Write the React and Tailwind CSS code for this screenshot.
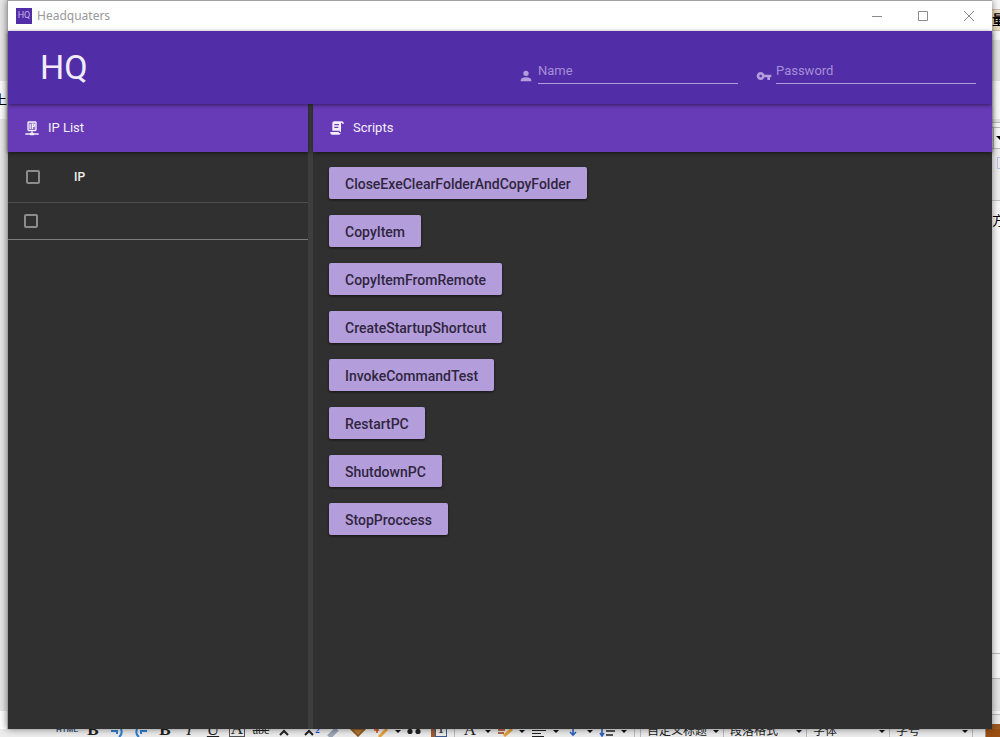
import React from "react";

const scripts = [
  "CloseExeClearFolderAndCopyFolder",
  "CopyItem",
  "CopyItemFromRemote",
  "CreateStartupShortcut",
  "InvokeCommandTest",
  "RestartPC",
  "ShutdownPC",
  "StopProccess",
];

function Icon({ d, className }) {
  return (
    <svg viewBox="0 0 24 24" fill="currentColor" className={className} aria-hidden="true">
      <path fillRule="evenodd" d={d} />
    </svg>
  );
}

const ACCOUNT =
  "M12,4A4,4 0 0,1 16,8A4,4 0 0,1 12,12A4,4 0 0,1 8,8A4,4 0 0,1 12,4M12,14C16.42,14 20,15.79 20,18V20H4V18C4,15.79 7.58,14 12,14Z";
const KEY =
  "M12.65 10C11.83 7.67 9.61 6 7 6c-3.31 0-6 2.69-6 6s2.69 6 6 6c2.61 0 4.83-1.67 5.65-4H17v4h4v-4h2v-4H12.65zM7 14c-1.1 0-2-.9-2-2s.9-2 2-2 2 .9 2 2-.9 2-2 2z";
const SCRIPT =
  "M17.8,20C17.4,21.2 16.3,22 15,22H5C3.3,22 2,20.7 2,19V18H5L14.2,18C14.6,19.2 15.7,20 17,20H17.8M19,2C20.7,2 22,3.3 22,5V6H20V5C20,4.4 19.6,4 19,4C18.4,4 18,4.4 18,5V18H17C16.4,18 16,17.6 16,17V16H5V5C5,3.3 6.3,2 8,2H19M8,6V8H15V6H8M8,10V12H14V10H8Z";

function IpIcon({ className }) {
  return (
    <svg viewBox="0 0 24 24" className={className} aria-hidden="true">
      <rect x="6" y="3" width="12" height="13" rx="1.2" fill="currentColor" fillOpacity="0.3" stroke="currentColor" strokeWidth="2" />
      <path d="M9.2 6v7.5M12.6 13.5V6h1.4a1.7 1.7 0 0 1 0 3.7h-1.4" fill="none" stroke="currentColor" strokeWidth="1.8" />
      <path d="M11 17h2v2h1a1 1 0 0 1 1 1h7v2h-7a1 1 0 0 1-1 1h-4a1 1 0 0 1-1-1H2v-2h7a1 1 0 0 1 1-1h1z" fill="currentColor" />
    </svg>
  );
}

function Field({ id, label, type, icon }) {
  return (
    <div className="flex items-end gap-1">
      <label htmlFor={id} aria-label={label}>
        <Icon d={icon} className="size-4 text-[#b39ddb]" />
      </label>
      <input
        id={id}
        type={type}
        placeholder={label}
        className="h-6 w-[200px] border-b border-[#b39ddb] bg-transparent pb-0.5 text-[13px] leading-4 text-white outline-none placeholder:text-[#a58fd6]"
      />
    </div>
  );
}

function Tick({ label }) {
  return (
    <input
      type="checkbox"
      aria-label={label}
      className="block size-3.5 shrink-0 appearance-none rounded-[2px] border-2 border-[#8c8c8c] checked:bg-[#b39ddb]"
    />
  );
}

function PanelHead({ icon, children }) {
  return (
    <h2 className="relative flex h-12 items-center gap-2 bg-[#673ab7] px-4 text-[13px] text-[#f4f0fa] shadow-[0_1px_4px_rgba(0,0,0,0.6)]">
      {icon}
      {children}
    </h2>
  );
}

function AppWindow() {
  return (
    <div className="relative flex min-w-0 flex-1 flex-col border-t border-l border-[#a0a0a0] bg-[#303030] shadow-[0_0_7px_rgba(0,0,0,0.5)]">
      <div className="flex h-[30px] shrink-0 items-center bg-white pl-2">
        <span className="flex size-4 items-center justify-center bg-[#512da8] text-[9px] text-[#c5b5e5]">HQ</span>
        <span className="ml-[5px] flex-1 font-['Noto_Sans'] text-[12px] text-[#999]">Headquaters</span>
        {[
          ["Minimize", "M3 8.5h10"],
          ["Maximize", "M3.5 3.5h9v9h-9z"],
          ["Close", "M3 3l10 10M13 3L3 13"],
        ].map(([name, d]) => (
          <button key={name} type="button" aria-label={name} className="flex h-full w-[46px] items-center justify-center text-[#8c8c8c]">
            <svg viewBox="0 0 16 16" className="size-4" fill="none" stroke="currentColor"><path d={d} /></svg>
          </button>
        ))}
      </div>
      <header className="relative z-20 flex h-[73px] shrink-0 items-center justify-between bg-[#512da8] pr-4 pl-8 shadow-[0_1px_4px_rgba(0,0,0,0.55)]">
        <h1 className="pb-0.5 text-[34px] leading-10 text-[#f1edf8]">HQ</h1>
        <div className="flex gap-[18px] pt-2">
          <Field id="name" label="Name" type="text" icon={ACCOUNT} />
          <Field id="password" label="Password" type="password" icon={KEY} />
        </div>
      </header>
      <div className="flex min-h-0 flex-1">
        <section className="w-[300px] shrink-0">
          <PanelHead icon={<IpIcon className="size-4" />}>IP List</PanelHead>
          <table className="w-full border-collapse text-left">
            <thead>
              <tr className="h-[50px] border-b border-[#4c4c4c]">
                <th className="w-[66px] pl-[18px]"><Tick label="Select all" /></th>
                <th className="text-[12px] font-medium text-[#f0f0f0]">IP</th>
              </tr>
            </thead>
            <tbody>
              <tr className="h-[37px] border-b border-[#7c7c7c]">
                <td className="pl-4"><Tick label="Select row" /></td>
                <td></td>
              </tr>
            </tbody>
          </table>
        </section>
        <div className="w-[5px] shrink-0 bg-[#3e3e3e]" />
        <section className="min-w-0 flex-1">
          <PanelHead icon={<Icon d={SCRIPT} className="size-4" />}>Scripts</PanelHead>
          <div className="flex flex-col items-start gap-4 px-4 py-[15px]">
            {scripts.map((name) => (
              <button key={name} type="button" className="h-8 rounded-[2px] bg-[#b39ddb] px-4 pt-0.5 text-[14px] font-medium text-[#30263f] shadow-[0_1px_3px_rgba(0,0,0,0.6)]">
                {name}
              </button>
            ))}
          </div>
        </section>
      </div>
    </div>
  );
}

function LeftEdge() {
  return (
    <div className="flex w-[7px] shrink-0 flex-col overflow-hidden bg-[#e6e6e6]">
      <div className="h-[81px]" />
      <div className="flex h-[38px] items-center justify-end bg-[#fafafa] text-[13px]">上</div>
      <div className="flex-1" />
      <div className="h-[18px] bg-white" />
    </div>
  );
}

function RightEdge() {
  return (
    <div className="flex w-2 shrink-0 flex-col overflow-hidden bg-[#f8f8f8] text-[13px] font-bold">
      <div className="h-[9px]" />
      <div className="flex h-[22px] items-center border-y border-[#c9c1ac] bg-[#e9dec0]">量</div>
      <div className="h-[9px]" />
      <div className="h-[41px] bg-[#e2e2e2]" />
      <div className="h-[38px]" />
      <div className="h-[4px] border-b border-[#bbb] bg-[#e4e4e4]" />
      <div className="h-[5px] border-b border-[#bbb]" />
      <div className="flex h-[21px] items-center justify-end border-b border-[#bbb]"><i className="ml-[3px] h-full w-px shrink-0 bg-[#bbb]" /><i className="ml-0.5 border-t-4 border-l-4 border-t-black border-l-transparent" /></div>
      <div className="flex h-[52px] justify-end border-b border-[#c4c4c4] bg-[#eeeeee]"><i className="mt-2 h-3 w-[3px] border border-r-0 border-[#b8c3e6]" /></div>
      <div className="flex h-10 items-center font-normal">方</div>
      <div className="flex-1" />
      <div className="h-[26px] border-y border-[#bbb]" />
      <div className="h-8 bg-[#e4e4e4]" />
      <div className="h-1 border-b border-[#bbb]" />
      <div className="h-[9px] bg-[#ececec]" />
      <div className="h-[5px] bg-[#9b5a20]" />
    </div>
  );
}

const Caret = () => <svg viewBox="0 0 6 8" className="h-2 w-1.5"><path d="M0 1h6L3 4z" fill="#111" /></svg>;
const Rule = () => <i className="h-2 w-px bg-[#bbb]" />;
const Art = ({ children }) => (
  <svg viewBox="0 0 18 8" className="h-2 w-[18px]" fill="none" stroke="#222" strokeWidth="1.6">{children}</svg>
);

/* Each tool takes a cell of its own width; the bar shows only the foot of every glyph. */
const tools = [
  ["w-7", <span className="font-['Liberation_Sans'] text-[8px] leading-[15px] font-bold text-[#3c5a80]">HTML</span>],
  ["w-6", <b>B</b>],
  ["w-6", <Art><path d="M3 2h6v3M11 8q4-3 2-8" stroke="#2f7fd0" strokeWidth="2" /></Art>],
  ["w-6", <Art><path d="M15 2H9v3M7 8q-4-3-2-8" stroke="#2f7fd0" strokeWidth="2" /></Art>],
  ["w-6", <b>B</b>],
  ["w-6", <i>I</i>],
  ["w-6", <span className="underline">U</span>],
  ["w-6", <span className="border border-[#555] px-px">A</span>],
  ["w-6", <span className="text-[12px] line-through">abc</span>],
  ["w-[22px]", <Art><path d="M5 6l4-4 4 4" strokeWidth="2" /></Art>],
  ["w-[27px]", <><Art><path d="M8 6l4-4 4 4" strokeWidth="2" /></Art><small className="text-[9px] font-bold text-blue-700">2</small></>],
  ["w-6", <Art><path d="M4 8l8-8" stroke="#9aa4b4" strokeWidth="5" /></Art>],
  ["w-6", <Art><path d="M2 0h14L9 7z" fill="#b57a35" stroke="#8d5720" /></Art>],
  ["w-6", <Art><path d="M6 8l8-8" stroke="#e5a23c" strokeWidth="3" /><path d="M1 1h5M4 0v4" stroke="#d9501d" /></Art>],
  ["w-2", <Caret />],
  ["w-6", <Art><circle cx="5" cy="2.5" r="2.6" fill="#222" stroke="none" /><circle cx="13" cy="2.5" r="2.6" fill="#222" stroke="none" /></Art>],
  ["w-[26px]", <><i className="h-2 w-1 bg-[#a35a2b]" /><span className="border border-[#3c5a90] px-px text-[14px]">T</span></>],
  ["w-1", <Rule />],
  ["w-7", <span>A</span>],
  ["w-2", <Caret />],
  ["w-[26px]", <Art><path d="M2 1h7M2 4h6" stroke="#a33d15" /><path d="M8 7l8-7" stroke="#e5a23c" strokeWidth="3" /></Art>],
  ["w-2", <Caret />],
  ["w-[26px]", <Art><path d="M2 1.5h14M2 4.5h9M2 7.5h12" strokeWidth="1" /></Art>],
  ["w-2", <Caret />],
  ["w-[26px]", <Art><path d="M9 0v6M6 3l3 3 3-3" stroke="#2f62c0" /></Art>],
  ["w-2", <Caret />],
  ["w-[26px]", <Art><path d="M4 0v7M2 4l2 3 2-3" stroke="#2f62c0" /><path d="M8 2h9M8 6h7" /></Art>],
  ["w-2", <Caret />],
  ["w-3", <Rule />],
];

const menus = ["自定义标题", "段落格式", "字体", "字号"];

function BottomToolbar() {
  return (
    <div className="flex h-2 shrink-0 overflow-hidden bg-[#ececec] pl-[53px] font-['Liberation_Serif','Noto_Sans_CJK_SC',serif] text-[17px] leading-[14px] text-[#222]">
      <Rule />
      {tools.map(([width, art], i) => (
        <div key={i} className={"flex shrink-0 items-end justify-center " + width}>{art}</div>
      ))}
      <div className="ml-auto flex shrink-0">
        {menus.map((name) => (
          <div key={name} className="flex w-[83px] items-end justify-between border-l border-[#bbb] pr-1 pl-1.5 font-['Noto_Sans_CJK_SC'] text-[12px] leading-[15px] whitespace-nowrap">
            {name}
            <Caret />
          </div>
        ))}
        <Rule />
        <div className="ml-3 w-4 border-x border-[#999] bg-[#9b4f12]" />
      </div>
    </div>
  );
}

export default function App() {
  return (
    <div className="flex h-screen flex-col overflow-hidden bg-[#e6e6e6] font-[Roboto,'Noto_Sans_CJK_SC',sans-serif]">
      <div className="flex min-h-0 flex-1">
        <LeftEdge />
        <AppWindow />
        <RightEdge />
      </div>
      <BottomToolbar />
    </div>
  );
}
